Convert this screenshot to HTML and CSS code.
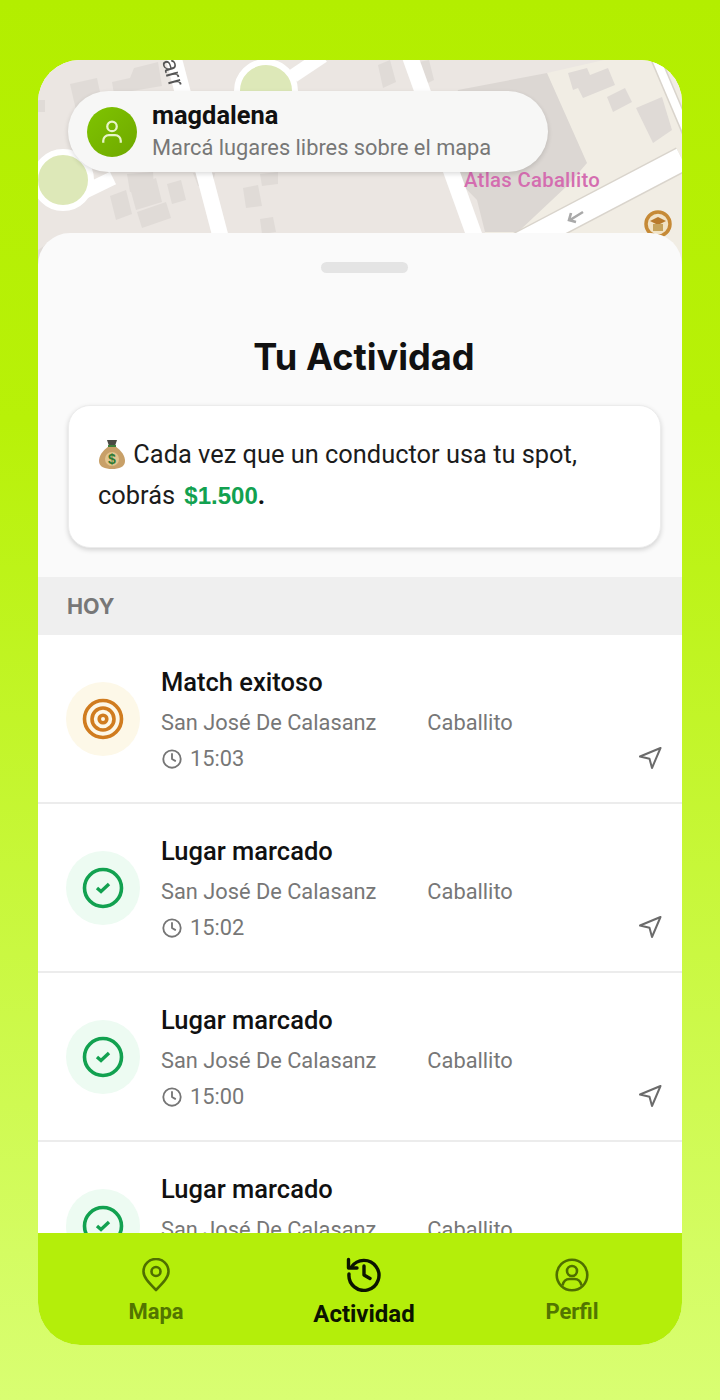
FILE: index.html
```html
<!DOCTYPE html>
<html lang="es">
<head>
    <meta charset="utf-8">
    <title>Tu Actividad</title>
    <link rel="stylesheet" href="styles.css">
</head>
<body>
    <div class="phone">
        <div class="map">
            <!-- map picture, coords are relative to the phone frame -->
            <svg class="map-art" viewBox="0 0 644 205" width="644" height="205">
                <rect width="644" height="205" fill="#ebe6e2"/>
                <polygon points="509,13 566,0 644,0 644,205 447,205 447,172" fill="#f1ede4"/>
                <polygon points="509,13 549,103 530,125 480,172 447,172 439,140 400,100 420,30" fill="#dcd7d3"/>
                <polygon points="530,13 549,8 552,15 570,8 577,25 545,38 540,28 535,30" fill="#dfdad6"/>
                <polygon points="569,37 587,28 594,42 575,52" fill="#dfdad6"/>
                <polygon points="598,48 624,37 634,70 615,83" fill="#dfdad6"/>
                <g fill="#e0dbd7">
                    <polygon points="32,24 59,18 64,42 38,50"/>
                    <polygon points="74,22 92,18 96,8 120,2 124,26 76,34"/>
                    <polygon points="0,40 7,40 7,52 0,52"/>
                    <polygon points="72,136 88,130 94,154 78,160"/>
                    <polygon points="92,128 118,118 124,142 98,150"/>
                    <polygon points="129,124 143,120 148,140 134,144"/>
                    <polygon points="99,152 128,142 133,158 104,168"/>
                    <polygon points="89,114 115,112 116,128 92,132"/>
                    <polygon points="155,113 177,113 175,124 160,126"/>
                    <polygon points="205,128 220,125 224,146 208,148"/>
                    <polygon points="222,114 240,112 240,124 224,126"/>
                    <polygon points="222,159 235,157 238,172 224,174"/>
                    <polygon points="0,190 22,175 30,205 0,205"/>
                    <polygon points="376,3 391,0 396,20 380,28"/>
                    <polygon points="340,5 352,0 358,22 345,28"/>
                </g>
                <g fill="none" stroke="#d9d4cc" stroke-linecap="butt">
                    <line x1="644" y1="99" x2="400" y2="227" stroke-width="26"/>
                    <line x1="615" y1="-8" x2="660" y2="98" stroke-width="11"/>
                </g>
                <g fill="none" stroke="#fff" stroke-linecap="butt">
                    <line x1="131" y1="-20" x2="190" y2="205" stroke-width="16"/>
                    <line x1="366" y1="-20" x2="447" y2="205" stroke-width="16"/>
                    <line x1="644" y1="99" x2="400" y2="227" stroke-width="23"/>
                    <line x1="615" y1="-8" x2="660" y2="98" stroke-width="8"/>
                    <line x1="255" y1="16" x2="285" y2="-4" stroke-width="14"/>
                    <line x1="40" y1="135" x2="75" y2="118" stroke-width="14"/>
                </g>
                <text class="map-street" transform="translate(124 1) rotate(74)">arr</text>
                <path d="M545 152l-13 8m1-7l-2 7 7 2" fill="none" stroke="#a9a9a9" stroke-width="2.6"/>
                <path d="M32 101l4 7" stroke="#222" stroke-width="1.6"/>
                <circle cx="228" cy="31" r="29" fill="#dde8b8" stroke="#fff" stroke-width="6"/>
                <circle cx="25" cy="120" r="28" fill="#dde8b8" stroke="#fff" stroke-width="6"/>
                <circle cx="620" cy="164" r="12" fill="#f1e3c6" stroke="#c68a36" stroke-width="3.5"/>
                <path d="M612 161l8-4 8 4-8 4z" fill="#b87a2c"/>
                <path d="M615 164h10v7h-10z" fill="#c6a35c"/>
            </svg>
            <span class="poi-label">Atlas Caballito</span>
            <div class="user-pill">
                <div class="avatar">
                    <svg viewBox="0 0 24 24" width="30" height="30" fill="none" stroke="#e8f5c8" stroke-width="1.8">
                        <circle cx="12" cy="7.5" r="3.8"/>
                        <path d="M5 20.5v-1.5a4.500 4.500 0 0 1 4.500-4.500h5a4.500 4.500 0 0 1 4.500 4.500v1.500"/>
                    </svg>
                </div>
                <div class="user-text">
                    <div class="user-name">magdalena</div>
                    <div class="user-hint">Marcá lugares libres sobre el mapa</div>
                </div>
            </div>
        </div>

        <div class="sheet">
            <div class="handle"></div>
            <h1 class="title">Tu Actividad</h1>
            <div class="info-card">
                <svg class="bag" viewBox="0 0 28 32" width="28" height="32">
                    <path d="M9 2h10l-2 6h-6z" fill="#4a4a44"/>
                    <path d="M11 8h6c7 5 10 10 10 15 0 6-6 8-13 8S1 29 1 23C1 18 4 13 11 8z" fill="#c8a068"/>
                    <path d="M10 7h8v2h-8z" fill="#3f7d3a"/>
                    <circle cx="14" cy="21" r="7" fill="#e2c48e"/>
                    <text class="bag-sign" x="14" y="26" text-anchor="middle">$</text>
                </svg>
                <span class="card-line"> Cada vez que un conductor usa tu spot,</span><br>
                cobrás <span class="amount">$1.500</span><span class="dot">.</span>
            </div>

            <div class="day-label">HOY</div>

            <div class="row">
                <div class="row-icon target">
                    <svg viewBox="0 0 44 44" width="44" height="44" fill="none" stroke="#d07c1f" stroke-width="3.6">
                        <circle cx="22" cy="22" r="18.5"/>
                        <circle cx="22" cy="22" r="11"/>
                        <circle cx="22" cy="22" r="3.8"/>
                    </svg>
                </div>
                <div class="row-body">
                    <div class="row-title">Match exitoso</div>
                    <div class="row-place"><span>San José De Calasanz</span><span>Caballito</span></div>
                    <div class="row-time">
                        <svg viewBox="0 0 24 24" width="22" height="22" fill="none" stroke="#757575" stroke-width="2" stroke-linecap="round" stroke-linejoin="round"><circle cx="12" cy="12" r="9.500"/><path d="M12 6.500V12l3.500 2"/></svg>
                        15:03
                    </div>
                </div>
                <svg class="row-nav" viewBox="0 0 24 24" width="24" height="24" fill="none" stroke="#6b6b6b" stroke-width="2" stroke-linejoin="round"><path d="M22.500 2 2 10.500l9.500 2.200L14 22z"/></svg>
            </div>

            <div class="row">
                <div class="row-icon check">
                    <svg viewBox="0 0 44 44" width="44" height="44" fill="none" stroke="#12a150" stroke-width="3.6"><circle cx="22" cy="22" r="18.500"/><path d="M16 22l4 3.500 8-7.500" stroke-width="3.400"/></svg>
                </div>
                <div class="row-body">
                    <div class="row-title">Lugar marcado</div>
                    <div class="row-place"><span>San José De Calasanz</span><span>Caballito</span></div>
                    <div class="row-time">
                        <svg viewBox="0 0 24 24" width="22" height="22" fill="none" stroke="#757575" stroke-width="2" stroke-linecap="round" stroke-linejoin="round"><circle cx="12" cy="12" r="9.500"/><path d="M12 6.500V12l3.500 2"/></svg>
                        15:02
                    </div>
                </div>
                <svg class="row-nav" viewBox="0 0 24 24" width="24" height="24" fill="none" stroke="#6b6b6b" stroke-width="2" stroke-linejoin="round"><path d="M22.500 2 2 10.500l9.500 2.200L14 22z"/></svg>
            </div>

            <div class="row">
                <div class="row-icon check">
                    <svg viewBox="0 0 44 44" width="44" height="44" fill="none" stroke="#12a150" stroke-width="3.6"><circle cx="22" cy="22" r="18.500"/><path d="M16 22l4 3.500 8-7.500" stroke-width="3.400"/></svg>
                </div>
                <div class="row-body">
                    <div class="row-title">Lugar marcado</div>
                    <div class="row-place"><span>San José De Calasanz</span><span>Caballito</span></div>
                    <div class="row-time">
                        <svg viewBox="0 0 24 24" width="22" height="22" fill="none" stroke="#757575" stroke-width="2" stroke-linecap="round" stroke-linejoin="round"><circle cx="12" cy="12" r="9.500"/><path d="M12 6.500V12l3.500 2"/></svg>
                        15:00
                    </div>
                </div>
                <svg class="row-nav" viewBox="0 0 24 24" width="24" height="24" fill="none" stroke="#6b6b6b" stroke-width="2" stroke-linejoin="round"><path d="M22.500 2 2 10.500l9.500 2.200L14 22z"/></svg>
            </div>

            <div class="row">
                <div class="row-icon check">
                    <svg viewBox="0 0 44 44" width="44" height="44" fill="none" stroke="#12a150" stroke-width="3.6"><circle cx="22" cy="22" r="18.500"/><path d="M16 22l4 3.500 8-7.500" stroke-width="3.400"/></svg>
                </div>
                <div class="row-body">
                    <div class="row-title">Lugar marcado</div>
                    <div class="row-place"><span>San José De Calasanz</span><span>Caballito</span></div>
                    <div class="row-time">&nbsp;</div>
                </div>
            </div>
        </div>

        <nav class="tabbar">
            <div class="tab">
                <svg viewBox="0 0 28 34" width="28" height="34" fill="none" stroke="#4f6f00" stroke-width="2.6" stroke-linejoin="round"><path d="M14 32C6 24 1.500 19 1.500 13.500a12.500 12.500 0 0 1 25 0C26.500 19 22 24 14 32z"/><circle cx="14" cy="13.500" r="4.500"/></svg>
                <span>Mapa</span>
            </div>
            <div class="tab active">
                <svg viewBox="0 0 36 36" width="36" height="36" fill="none" stroke="#0c1400" stroke-width="3.400" stroke-linecap="round" stroke-linejoin="round"><path d="M5.500 11A15 15 0 1 1 3 18"/><path d="M2.500 3.500v8.500h8.500"/><path d="M18 10v9l6 3.500"/></svg>
                <span>Actividad</span>
            </div>
            <div class="tab">
                <svg viewBox="0 0 34 34" width="34" height="34" fill="none" stroke="#4f6f00" stroke-width="2.600"><circle cx="17" cy="17" r="15.300"/><circle cx="17" cy="13" r="5"/><path d="M7.500 27.500c1-4.500 4-6.500 7-6.500h5c3 0 6 2 7 6.500"/></svg>
                <span>Perfil</span>
            </div>
        </nav>
    </div>
</body>
</html>
```

FILE: styles.css
```css
* {
    box-sizing: border-box;
}
body {
    margin: 0;
    height: 1400px;
    padding: 60px 38px 55px;
    background: linear-gradient(180deg, #b3ee00 0%, #b8f108 30%, #d9fe72 100%);
    font-family: Roboto, Arial, sans-serif;
    overflow: hidden;
}
.phone {
    height: 1285px;
    border-radius: 42px;
    overflow: hidden;
    display: flex;
    flex-direction: column;
    background: #fff;
}

/* map header */
.map {
    flex: 0 0 205px;
    position: relative;
    overflow: hidden;
}
.map-art {
    display: block;
    filter: blur(0.5px);
}
.map-street {
    font-family: "Liberation Sans", Arial, sans-serif;
    font-size: 23px;
    fill: #555;
}
.poi-label {
    position: absolute;
    left: 426px;
    top: 108px;
    font-size: 20.300px;
    font-weight: 500;
    letter-spacing: 0.3px;
    color: #d46db0;
    white-space: nowrap;
}
.user-pill {
    position: absolute;
    left: 30px;
    top: 31px;
    width: 480px;
    height: 81px;
    padding: 0 19px;
    display: flex;
    align-items: center;
    gap: 15px;
    background: #f7f7f6;
    border-radius: 41px;
    box-shadow: 0 2px 5px rgba(0, 0, 0, 0.14);
}
.avatar {
    width: 50px;
    height: 50px;
    border-radius: 50%;
    background: linear-gradient(135deg, #7fc400, #6fa800);
    display: flex;
    align-items: center;
    justify-content: center;
}
.user-name {
    font-size: 25.400px;
    font-weight: 700;
    color: #111;
    line-height: 30px;
    margin-top: 1px;
}
.user-hint {
    font-size: 21.800px;
    color: #777;
    line-height: 34px;
    margin-top: 1px;
}

/* bottom sheet */
.sheet {
    flex: 1;
    min-height: 0;
    margin-top: -32px;
    position: relative;
    overflow: hidden;
    background: #fafafa;
    border-radius: 32px 32px 0 0;
}
.handle {
    width: 87px;
    height: 11px;
    border-radius: 6px;
    background: #e4e4e4;
    margin: 29px 0 0 283px;
}
.title {
    margin: 0;
    padding: 67px 0 0 8px;
    height: 132px;
    line-height: 34px;
    text-align: center;
    font-family: Inter, sans-serif;
    font-size: 36.200px;
    font-weight: 700;
    color: #111;
}
.info-card {
    margin: 0 21px 29px 30px;
    height: 143px;
    padding: 28px 29px;
    background: #fff;
    border: 1px solid #ececec;
    border-radius: 22px;
    box-shadow: 0 2px 5px rgba(0, 0, 0, 0.16);
    font-size: 25.400px;
    line-height: 41px;
    color: #1c1c1c;
}
.bag {
    vertical-align: -7px;
}
.card-line {
    margin-left: 1px;
}
.bag-sign {
    font-family: "Liberation Sans", Arial, sans-serif;
    font-size: 14px;
    font-weight: bold;
    fill: #2f7a33;
}
.amount {
    font-family: "Liberation Sans", Arial, sans-serif;
    font-weight: bold;
    font-size: 24px;
    color: #12a150;
    margin-left: 3px;
}
.dot {
    font-weight: bold;
    color: #111;
}
.day-label {
    height: 58px;
    line-height: 58px;
    padding-left: 29px;
    background: #efefef;
    font-family: Inter, sans-serif;
    font-weight: 700;
    font-size: 21.500px;
    color: #777;
}

/* activity rows */
.row {
    height: 169px;
    padding: 0 20px 0 28px;
    display: flex;
    align-items: center;
    gap: 21px;
    position: relative;
    background: #fff;
    border-bottom: 2px solid #ececec;
}
.row-icon {
    width: 74px;
    height: 74px;
    border-radius: 50%;
    flex: none;
    display: flex;
    align-items: center;
    justify-content: center;
}
.row-icon.target {
    background: #fdf8e8;
}
.row-icon.check {
    background: #edfbf2;
}
.row-body {
    flex: 1;
    padding-top: 3px;
}
.row-title {
    font-size: 25.500px;
    font-weight: 500;
    color: #111;
    line-height: 30px;
}
.row-place {
    margin-top: 11px;
    display: flex;
    gap: 51px;
    font-size: 21.800px;
    line-height: 30px;
    color: #777;
}
.row-time {
    margin-top: 6px;
    display: flex;
    align-items: center;
    gap: 7px;
    font-size: 21.800px;
    line-height: 30px;
    color: #777;
}
.row-nav {
    position: absolute;
    right: 20px;
    bottom: 32px;
}

/* tab bar */
.tabbar {
    flex: 0 0 112px;
    padding: 0 6px 0 14px;
    display: grid;
    grid-template-columns: repeat(3, 1fr);
    background: #b4ee0a;
    position: relative;
}
.tab {
    display: flex;
    flex-direction: column;
    align-items: center;
    padding-top: 25px;
    gap: 7px;
    font-size: 22px;
    font-weight: 700;
    color: #527500;
}
.tab span {
    line-height: 26px;
}
.tab.active {
    padding-top: 23px;
    gap: 9px;
    font-size: 24px;
    color: #0c1400;
}
```
